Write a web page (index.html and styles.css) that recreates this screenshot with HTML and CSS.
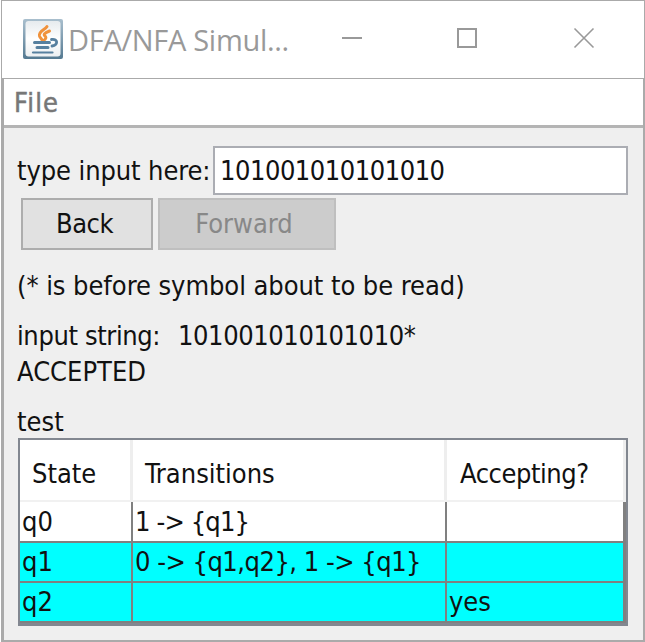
FILE: index.html
```html
<!DOCTYPE html>
<html lang="en">
<head>
<meta charset="utf-8">
<title>DFA/NFA Simulator</title>
<link rel="stylesheet" href="styles.css">
</head>
<body>
<div class="window">
  <header class="titlebar">
    <svg class="app-icon" viewBox="0 0 40 40">
      <defs>
        <linearGradient id="frame" x1="0" y1="0" x2="0" y2="1"><stop offset="0" stop-color="#a9bfce"/><stop offset="1" stop-color="#547991"/></linearGradient>
        <linearGradient id="face" x1="0" y1="0" x2="0" y2="1"><stop offset="0" stop-color="#e6ebee"/><stop offset=".5" stop-color="#ffffff"/><stop offset="1" stop-color="#edf0f2"/></linearGradient>
      </defs>
      <rect width="40" height="40" rx="2" fill="url(#frame)"/>
      <rect x="2.5" y="2" width="35" height="35.5" rx="3" fill="url(#face)"/>
      <g fill="none" stroke="#f0923c" stroke-linecap="round">
        <path stroke-width="3" d="M24 7.500C22 11 15.500 12 16.500 17C17 19 18.500 19.500 19 21"/>
        <path stroke-width="3" d="M26.500 12C21 14 20 16 22.500 17.500C23.500 19 22 20.500 20.500 21.500"/>
      </g>
      <g fill="none" stroke="#57809f" stroke-linecap="round">
        <path stroke-width="3" d="M11.500 23.500H26.500M14 28.500H25"/>
        <path stroke-width="2.800" d="M28.500 20.500C35.500 19.500 35 26 29 27"/>
        <path stroke-width="2.200" d="M10 33.500H29.500"/>
      </g>
    </svg>
    <span class="title">DFA/NFA Simul...</span>
    <svg class="controls" viewBox="0 0 238 30">
      <g fill="none" stroke="#999" stroke-width="2">
        <path d="M0 15H20"/>
        <rect x="116" y="6" width="18" height="18"/>
        <path stroke-width="1.600" d="M232.500 5.500L251.500 24.500M251.500 5.500L232.500 24.500"/>
      </g>
    </svg>
  </header>
  <div class="frame">
    <nav class="menubar"><span class="menu">File</span></nav>
    <main class="content">
      <div class="input-row">
        <label class="label">type input here:</label>
        <div class="field">101001010101010</div>
      </div>
      <div class="buttons">
        <div class="button back">Back</div>
        <div class="button forward">Forward</div>
      </div>
      <p class="hint">(* is before symbol about to be read)</p>
      <p class="status"><span class="caption">input string:</span><span class="digits">101001010101010*</span></p>
      <p class="verdict">ACCEPTED</p>
      <p class="name">test</p>
      <div class="table">
        <div class="row head"><div class="cell">State</div><div class="cell">Transitions</div><div class="cell accepting">Accepting?</div></div>
        <div class="row"><div class="cell">q0</div><div class="cell rule">1 -&gt; {q1}</div><div class="cell"></div></div>
        <div class="row active"><div class="cell">q1</div><div class="cell rule">0 -&gt; {q1,q2}, 1 -&gt; {q1}</div><div class="cell"></div></div>
        <div class="row active"><div class="cell">q2</div><div class="cell"></div><div class="cell">yes</div></div>
      </div>
    </main>
  </div>
</div>
</body>
</html>
```
FILE: styles.css
```css
* { box-sizing: border-box; }
body { margin: 0; background: #fff; }
.window {
  width: 645px;
  height: 642px;
  padding-left: 1px;
  font: 27px/36px "DejaVu Sans Condensed", "DejaVu Sans", sans-serif;
  font-stretch: condensed;
  color: #111;
}
.titlebar {
  display: flex;
  height: 79px;
  border: 1px solid #aaa;
  padding: 18px 0 0 21px;
}
.app-icon { width: 40px; height: 40px; flex: none; }
.title {
  width: 279px;
  padding-left: 5px;
  font: 400 29px/41px "Open Sans", sans-serif;
  letter-spacing: -0.3px;
  color: #999;
  white-space: nowrap;
}
.controls { width: 238px; height: 30px; margin-top: 4px; overflow: visible; flex: none; }
.frame {
  height: 563px;
  border: solid #aaa;
  border-width: 0 2px 2px 3px;
  background: #efefef;
}
.menubar {
  height: 49px;
  padding: 6px 0 0 10px;
  background: #fff;
  border-bottom: 3px solid #b4b4b4;
}
.menu { color: #777; letter-spacing: 1.2px; -webkit-text-stroke: 0.5px #777; }
.content { padding: 18px 13px 0; white-space: nowrap; }
.content p { margin: 0; }
.input-row { display: flex; height: 49px; }
.label { width: 196px; padding-top: 7px; letter-spacing: -0.1px; }
.field {
  width: 415px;
  padding: 5px 0 0 5px;
  border: 2px solid #abadb3;
  background: #fff;
  letter-spacing: -0.48px;
}
.buttons { display: flex; gap: 5px; padding: 3px 0 0 4px; }
.button { height: 52px; border: 2px solid #adadad; padding-top: 6px; text-align: center; letter-spacing: -0.5px; }
.back { width: 132px; padding-right: 5px; background: #e1e1e1; }
.forward { width: 178px; padding-right: 6px; background: #ccc; border-color: #bfbfbf; color: #888; letter-spacing: 0; }
.hint { padding-top: 18px; letter-spacing: -0.06px; }
.status { display: flex; padding-top: 14px; }
.caption { width: 161px; letter-spacing: -0.38px; }
.digits { letter-spacing: -0.4px; }
.name { height: 48px; padding-top: 14px; }
.table {
  width: 610px;
  height: 188px;
  margin-left: 1px;
  border: 2px solid #828790;
  border-bottom-width: 3px;
  background: #fff;
}
.row { display: grid; grid-template-columns: 113px 314px 179px; height: 40px; }
.head { height: 62px; border-bottom: 2px solid #f1f1f1; }
.row:not(.head) { border-bottom: 2px solid #808080; }
.head + .row { height: 41px; }
.cell { border-right: 2px solid #808080; padding: 1px 0 0 2px; }
.row .cell:last-child { border-right-width: 3px; }
.head .cell { border-right: 3px solid #eee; padding: 16px 0 0 12px; }
.head .accepting { padding-left: 13px; letter-spacing: -0.45px; }
.rule { letter-spacing: -0.5px; }
.head + .row .cell { padding-top: 2px; }
.head + .row .rule { letter-spacing: -0.85px; }
.active { background: #0ff; }
```
